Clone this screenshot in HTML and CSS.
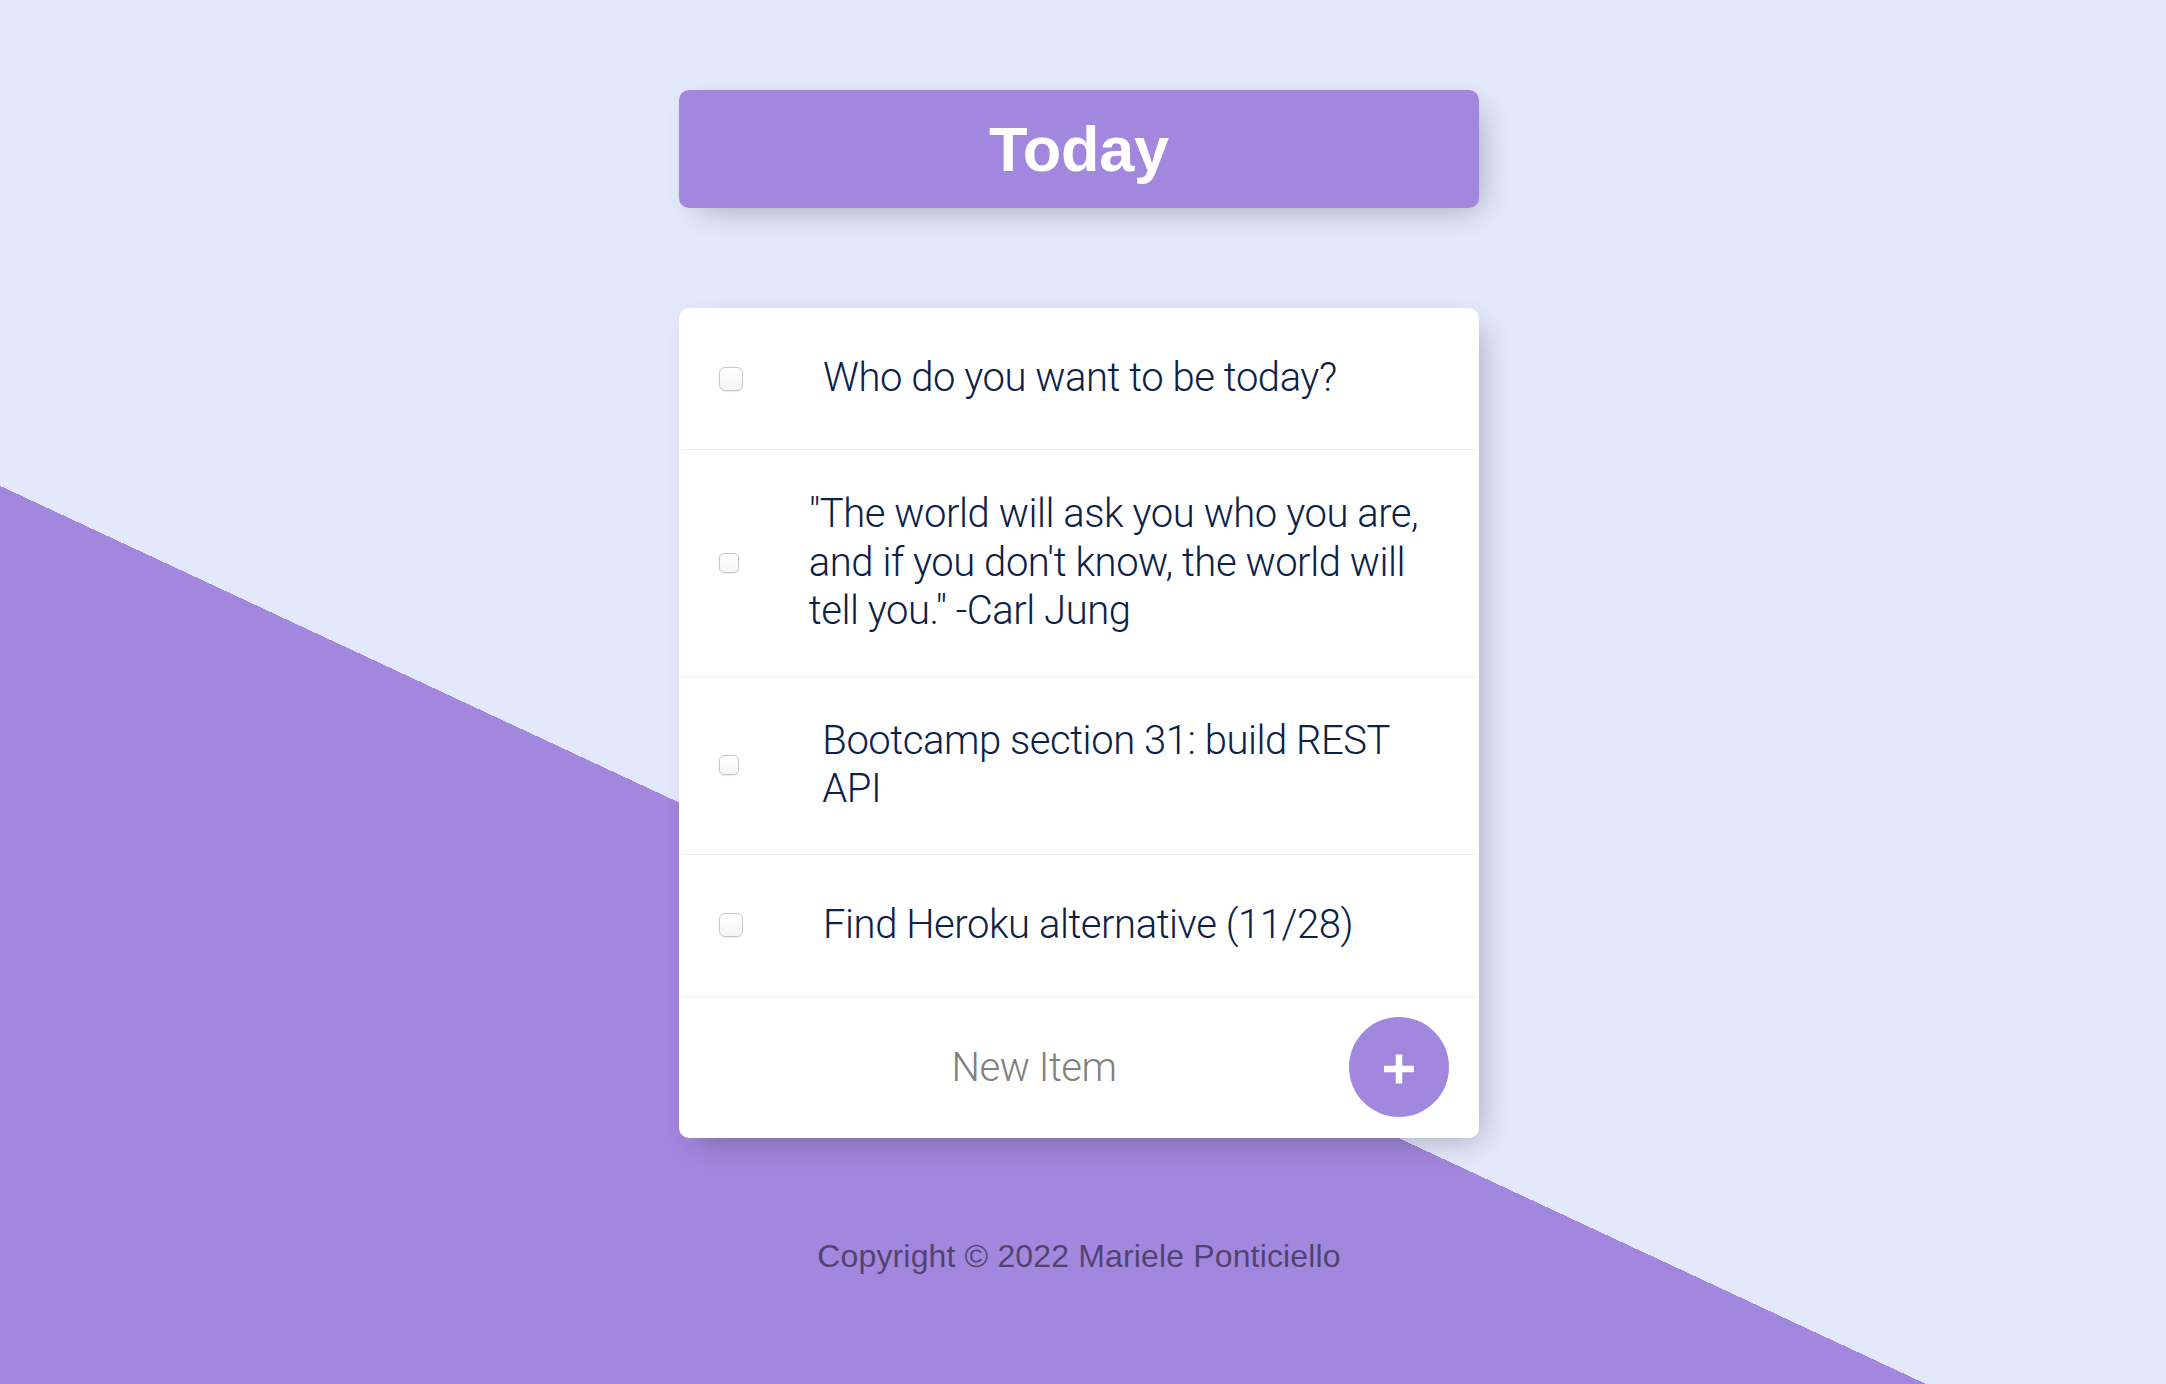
FILE: index.html
```html
<!DOCTYPE html>
<html lang="en">
<head>
<meta charset="utf-8">
<title>To Do List</title>
<link rel="stylesheet" href="styles.css">
</head>
<body>
<div class="page">
  <div class="box heading">
    <h1 class="title">Today</h1>
  </div>

  <div class="box list">
    <form class="item">
      <span class="check-slot"><input type="checkbox" class="check"></span>
      <p class="text">Who do you want to be today?</p>
    </form>
    <form class="item">
      <span class="check-slot"><input type="checkbox" class="check check--small"></span>
      <p class="text">"The world will ask you who you are, and if you don't know, the world will tell you." -Carl Jung</p>
    </form>
    <form class="item">
      <span class="check-slot"><input type="checkbox" class="check check--small"></span>
      <p class="text">Bootcamp section 31: build REST API</p>
    </form>
    <form class="item">
      <span class="check-slot"><input type="checkbox" class="check"></span>
      <p class="text">Find Heroku alternative (11/28)</p>
    </form>
    <form class="item new-item">
      <input type="text" class="new-input" name="newItem" placeholder="New Item" autocomplete="off">
      <button type="button" class="add-btn" aria-label="Add">
        <svg class="add-icon" width="32" height="32" viewBox="0 0 32 32" aria-hidden="true">
          <rect x="1" y="12.75" width="30" height="6.5" fill="#ffffff"/>
          <rect x="12.75" y="1.5" width="6.5" height="29" fill="#ffffff"/>
        </svg>
      </button>
    </form>
  </div>

  <footer class="footer">Copyright © 2022 Mariele Ponticiello</footer>
</div>
</body>
</html>
```

FILE: styles.css
```css
html {
  background-color: #E4E8FB;
  background-image: linear-gradient(25deg, #A187DD 50%, #E4E8FB 50%);
  background-repeat: no-repeat;
  background-size: 2158px 1978px;
  height: 100%;
}

body {
  margin: 0;
  height: 100%;
  overflow: hidden;
  font-family: "Liberation Sans", Arial, sans-serif;
}

.page {
  padding: 90px 8px 0 0;
  box-sizing: border-box;
  display: flex;
  flex-direction: column;
  align-items: center;
}

.box {
  width: 800px;
  border-radius: 10px;
  box-shadow: 10px 10px 30px -10px rgba(0, 0, 0, 0.3);
}

.heading {
  background-color: #A187DD;
  text-align: center;
}

.title {
  margin: 0;
  padding: 20px;
  color: #ffffff;
  font-family: "Liberation Sans", Arial, sans-serif;
  font-weight: 700;
  font-size: 63px;
  line-height: 78px;
  letter-spacing: -0.2px;
}

.list {
  margin-top: 100px;
  background: #ffffff;
}

.item {
  margin: 0;
  min-height: 141px;
  display: flex;
  align-items: center;
  border-bottom: 1px solid #F1F1F1;
}

.check-slot {
  flex: 0 1 24px;
  min-width: 0;
  margin: 0 40px;
  display: flex;
  align-items: center;
}

.check {
  appearance: none;
  -webkit-appearance: none;
  flex: none;
  display: block;
  margin: 0;
  width: 24px;
  height: 24px;
  box-sizing: border-box;
  border: 1.5px solid #c9c9c9;
  border-radius: 6px;
  background: linear-gradient(#ffffff, #f5f5f5);
  box-shadow: 0 0.5px 1px rgba(0, 0, 0, 0.08);
}

.check--small {
  width: 20px;
  height: 20px;
  border-radius: 5px;
}

.text {
  margin: 0;
  padding: 40px;
  font-family: Roboto, "Liberation Sans", Arial, sans-serif;
  font-size: 40px;
  font-weight: 300;
  line-height: 48.5px;
  letter-spacing: -0.45px;
  color: #0b2149;
}

.new-item {
  border-bottom: 0;
  margin-left: 40px;
}

.new-input {
  flex: none;
  width: 630px;
  height: 120px;
  box-sizing: border-box;
  padding: 0;
  border: none;
  background: transparent;
  text-align: center;
  font-family: Roboto, "Liberation Sans", Arial, sans-serif;
  font-size: 40px;
  font-weight: 300;
  letter-spacing: -0.45px;
  color: #0b2149;
  outline: none;
}

.new-input::placeholder {
  color: #808080;
  opacity: 1;
}

.add-btn {
  flex: none;
  width: 100px;
  height: 100px;
  padding: 0;
  border: 0;
  border-radius: 50%;
  background-color: #A187DD;
  display: flex;
  align-items: center;
  justify-content: center;
}

.add-icon {
  display: block;
  margin-top: 3px;
}

.footer {
  margin-top: 100px;
  font-family: "Liberation Sans", Arial, sans-serif;
  font-size: 32px;
  letter-spacing: 0.15px;
  color: rgba(0, 0, 0, 0.5);
  text-align: center;
}
```
